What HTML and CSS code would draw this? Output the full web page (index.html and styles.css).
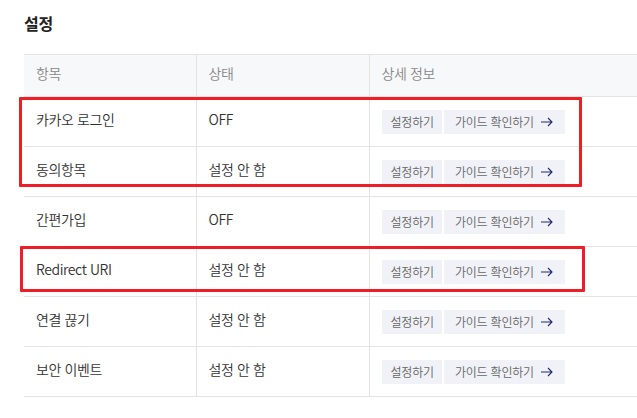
FILE: index.html
```html
<!DOCTYPE html>
<html lang="ko">
<head>
<meta charset="utf-8">
<link rel="stylesheet" href="styles.css">
</head>
<body>
<div class="page">
  <h1 class="title">설정</h1>
  <div class="table-wrap">
    <table class="settings">
      <colgroup><col class="c1"><col class="c2"><col class="c3"></colgroup>
      <thead>
        <tr><th>항목</th><th>상태</th><th>상세 정보</th></tr>
      </thead>
      <tbody>
        <tr><td>카카오 로그인</td><td>OFF</td><td class="actions"><span class="btn">설정하기</span><span class="btn guide">가이드 확인하기 <svg class="arrow" viewBox="0 0 12 10" width="12" height="10"><path d="M0 5H11M7 1l4 4-4 4" fill="none" stroke="#1e2a6e" stroke-width="1.1"/></svg></span></td></tr>
        <tr><td>동의항목</td><td>설정 안 함</td><td class="actions"><span class="btn">설정하기</span><span class="btn guide">가이드 확인하기 <svg class="arrow" viewBox="0 0 12 10" width="12" height="10"><path d="M0 5H11M7 1l4 4-4 4" fill="none" stroke="#1e2a6e" stroke-width="1.1"/></svg></span></td></tr>
        <tr><td>간편가입</td><td>OFF</td><td class="actions"><span class="btn">설정하기</span><span class="btn guide">가이드 확인하기 <svg class="arrow" viewBox="0 0 12 10" width="12" height="10"><path d="M0 5H11M7 1l4 4-4 4" fill="none" stroke="#1e2a6e" stroke-width="1.1"/></svg></span></td></tr>
        <tr><td>Redirect URI</td><td>설정 안 함</td><td class="actions"><span class="btn">설정하기</span><span class="btn guide">가이드 확인하기 <svg class="arrow" viewBox="0 0 12 10" width="12" height="10"><path d="M0 5H11M7 1l4 4-4 4" fill="none" stroke="#1e2a6e" stroke-width="1.1"/></svg></span></td></tr>
        <tr><td>연결 끊기</td><td>설정 안 함</td><td class="actions"><span class="btn">설정하기</span><span class="btn guide">가이드 확인하기 <svg class="arrow" viewBox="0 0 12 10" width="12" height="10"><path d="M0 5H11M7 1l4 4-4 4" fill="none" stroke="#1e2a6e" stroke-width="1.1"/></svg></span></td></tr>
        <tr><td>보안 이벤트</td><td>설정 안 함</td><td class="actions"><span class="btn">설정하기</span><span class="btn guide">가이드 확인하기 <svg class="arrow" viewBox="0 0 12 10" width="12" height="10"><path d="M0 5H11M7 1l4 4-4 4" fill="none" stroke="#1e2a6e" stroke-width="1.1"/></svg></span></td></tr>
      </tbody>
    </table>
    <div class="highlight hl-1"></div>
    <div class="highlight hl-2"></div>
  </div>
</div>
</body>
</html>
```
FILE: styles.css
```css
html, body {
  margin: 0;
  padding: 0;
  background: #fff;
  overflow: hidden;
}
body {
  font-family: "Noto Sans CJK KR", "Noto Sans", sans-serif;
  color: #333;
}
.page {
  padding: 11px 0 0 24px;
}
.title {
  margin: 0 0 19px;
  font-size: 16px;
  line-height: 24px;
  font-weight: 700;
  color: #222;
  letter-spacing: -0.3px;
}
.table-wrap {
  position: relative;
  width: 640px;
}
.settings {
  width: 640px;
  border-collapse: collapse;
  table-layout: fixed;
}
.c1 { width: 172px; }
.c2 { width: 173px; }
.settings th,
.settings td {
  box-sizing: border-box;
  text-align: left;
  vertical-align: middle;
  padding: 0 12px 5px;
  border-top: 1px solid #e4e4e4;
  border-bottom: 1px solid #e4e4e4;
  border-left: 1px solid #e4e4e4;
  font-size: 14px;
  font-weight: 350;
  line-height: 20px;
  letter-spacing: -0.4px;
  white-space: nowrap;
}
.settings th:first-child,
.settings td:first-child {
  border-left: none;
}
.settings th {
  height: 42px;
  background: #f7f8f9;
  color: #888;
}
.settings td {
  height: 50px;
  color: #333;
}
.settings td.actions {
  padding: 0 12px;
  font-size: 0;
  letter-spacing: 0;
}
.btn {
  display: inline-flex;
  align-items: center;
  height: 24px;
  padding: 0 8px 0 9px;
  margin-right: 2px;
  background: #f1f2f7;
  color: #666;
  font-size: 12px;
  font-weight: 350;
  line-height: 24px;
  letter-spacing: -0.2px;
  vertical-align: middle;
}
.btn.guide {
  padding: 0 12px 0 11px;
  gap: 7px;
}
.arrow {
  display: block;
}
.highlight {
  position: absolute;
  border: 3px solid #ee1d26;
  border-radius: 1px;
  box-sizing: border-box;
}
.hl-1 {
  left: -5px;
  top: 43px;
  width: 563px;
  height: 90px;
}
.hl-2 {
  left: -4px;
  top: 192px;
  width: 565px;
  height: 46px;
}
```
